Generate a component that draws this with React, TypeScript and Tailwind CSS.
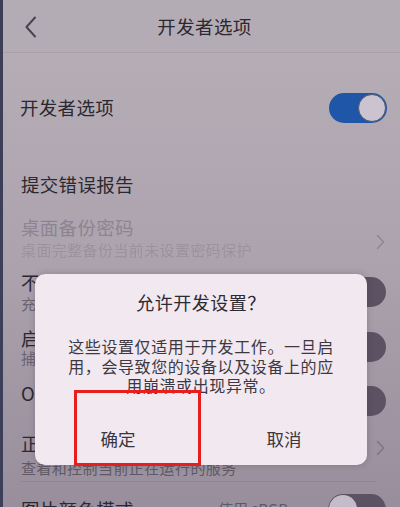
import React from "react";

function Toggle({ on }: { on: boolean }) {
  if (on) {
    return (
      <div className="flex h-[30px] w-[58px] shrink-0 items-center justify-end rounded-full bg-[#1f56a8] pr-[1px]">
        <div className="h-[28px] w-[28px] rounded-full border border-[#5a5868] bg-[#cbc3cf]" />
      </div>
    );
  }
  return (
    <div className="flex h-[30px] w-[58px] shrink-0 items-center justify-start rounded-full bg-[#5c5263] pl-[1px]">
      <div className="h-[28px] w-[28px] rounded-full bg-[#c4bcc8]" />
    </div>
  );
}

function Chevron({ className }: { className: string }) {
  return (
    <svg width="9" height="16" viewBox="0 0 9 16" className={className}>
      <path d="M1.5 1.5 L7.5 8 L1.5 14.5" fill="none" stroke="currentColor" strokeWidth="1.6" strokeLinecap="round" strokeLinejoin="round" />
    </svg>
  );
}

export default function App() {
  return (
    <div className="relative h-[507px] w-[400px] overflow-hidden border-l-[3px] border-[#3b4058] bg-gradient-to-b from-[#b8b0b8] via-[#aca3ae] to-[#988e9c] font-['Noto_Sans_CJK_SC','Noto_Sans',sans-serif] text-[#2c2830]">
      {/* header */}
      <div className="relative flex h-[53px] items-center justify-center border-b border-[#a9a0aa] bg-[#b4acb4]">
        <svg width="14" height="22" viewBox="0 0 14 22" className="absolute left-[21px] top-[16px] text-[#4a4552]">
          <path d="M11 1.5 L2.5 11 L11 20.5" fill="none" stroke="currentColor" strokeWidth="2" strokeLinecap="round" strokeLinejoin="round" />
        </svg>
        <span className="ml-[6px] text-[18.5px] leading-none tracking-[0.4px]">开发者选项</span>
      </div>

      {/* list */}
      <div className="flex flex-col">
        <div className="flex h-[110px] items-center justify-between pl-[17px] pr-[13px]">
          <span className="text-[18.5px] tracking-[0.3px]">开发者选项</span>
          <Toggle on />
        </div>

        <div className="flex h-[44px] items-center pl-[18px]">
          <span className="text-[18.5px] tracking-[0.3px]">提交错误报告</span>
        </div>

        <div className="flex items-center justify-between pl-[18px] pr-[15px] pt-[9px]">
          <div className="flex flex-col">
            <span className="text-[18.5px] leading-[22px] tracking-[0.3px] text-[#8c8591]">桌面备份密码</span>
            <span className="mt-[3px] text-[15px] leading-[18px] tracking-[0.4px] text-[#9a929e] blur-[0.6px]">桌面完整备份当前未设置密码保护</span>
          </div>
          <Chevron className="mt-[8px] text-[#8f8894]" />
        </div>

        <div className="mt-[12px] flex items-center justify-between pl-[18px] pr-[14px]">
          <div className="flex flex-col">
            <span className="text-[18.5px] leading-[22px] tracking-[0.3px]">不锁定屏幕</span>
            <span className="mt-[2px] text-[15px] leading-[18px] text-[#6a6470]">充电时屏幕不会休眠</span>
          </div>
          <Toggle on={false} />
        </div>

        <div className="mt-[14px] flex items-center justify-between pl-[18px] pr-[14px]">
          <div className="flex flex-col">
            <span className="text-[18.5px] leading-[22px] tracking-[0.3px]">启用蓝牙 HCI 信息收集日志</span>
            <span className="text-[15px] leading-[18px] text-[#6a6470]">捕获单个文件中的所有蓝牙 HCI 数据包</span>
          </div>
          <Toggle on={false} />
        </div>

        <div className="mt-[15px] flex h-[22px] items-center justify-between pl-[18px] pr-[14px]">
          <span className="text-[18.5px] leading-[22px] tracking-[0.3px]">OEM 解锁</span>
          <div className="flex h-[22px] items-center">
            <div className="translate-y-[8px]">
              <Toggle on={false} />
            </div>
          </div>
        </div>

        <div className="mt-[28px] flex items-center justify-between pl-[18px] pr-[15px]">
          <div className="flex flex-col">
            <span className="text-[18.5px] leading-[22px] tracking-[0.3px]">正在运行的服务</span>
            <span className="mt-[5px] text-[15px] leading-[18px] tracking-[0.4px] text-[#5f5966]">查看和控制当前正在运行的服务</span>
          </div>
          <Chevron className="mb-[14px] text-[#7e7684]" />
        </div>

        <div className="ml-[18px] mr-[24px] mt-[4px] h-px bg-[#8f8594]" />

        <div className="mt-[12px] flex items-center justify-between pl-[18px] pr-[14px]">
          <span className="text-[18.5px] leading-[22px] tracking-[0.3px]">图片颜色模式</span>
          <div className="flex items-center gap-[40px]">
            <span className="text-[15px] text-[#5f5966]">使用 sRGB</span>
            <Toggle on={false} />
          </div>
        </div>
      </div>

      {/* dialog */}
      <div className="absolute left-[32px] top-[274px] flex h-[191px] w-[332px] flex-col items-center rounded-[10px] bg-[#f1e8f0] pt-[16px] shadow-[0_0_6px_rgba(60,40,60,0.25)]">
        <span className="text-[18px] leading-[24px] tracking-[0.5px] text-[#2e2a32]">允许开发设置？</span>
        <p className="mt-[23px] text-center text-[16px] leading-[19.5px] tracking-[0.6px] text-[#3d3942]">
          这些设置仅适用于开发工作。一旦启
          <br />
          用，会导致您的设备以及设备上的应
          <br />
          用崩溃或出现异常。
        </p>
        <div className="mt-auto flex h-[58px] w-full items-center">
          <button className="flex-1 pt-[6px] text-[17.5px] text-[#3a363e]">确定</button>
          <button className="flex-1 pt-[6px] text-[17.5px] text-[#3a363e]">取消</button>
        </div>
      </div>

      {/* annotation */}
      <div className="absolute left-[71px] top-[390px] h-[76px] w-[127px] border-[3px] border-[#e61e1e]" />
    </div>
  );
}
